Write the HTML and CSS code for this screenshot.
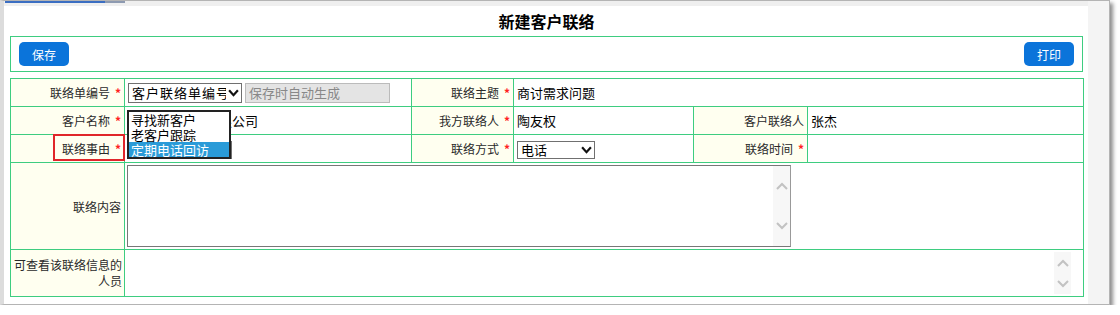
FILE: index.html
```html
<!DOCTYPE html>
<html lang="zh-CN">
<head>
    <meta charset="UTF-8">
    <title>新建客户联络</title>
    <link rel="stylesheet" href="styles.css">
</head>
<body>
<div class="frame">
    <div class="page">
        <div class="tabs"><span class="tab-on"></span><span class="tab-off"></span></div>
        <h2>新建客户联络</h2>
        <div class="toolbar">
            <button type="button">保存</button>
            <button type="button">打印</button>
        </div>
        <table class="grid">
            <colgroup>
                <col style="width:114px">
                <col style="width:287px">
                <col style="width:102px">
                <col style="width:180px">
                <col style="width:114px">
                <col style="width:276px">
            </colgroup>
            <tr class="row">
                <td class="lbl">联络单编号<span class="req">*</span></td>
                <td class="val">
                    <div class="inline">
                        <span class="sel sel-no"><span class="sel-text">客户联络单编号</span><svg class="arrow" viewBox="0 0 10 7"><path d="M1 1 L5 5.5 L9 1"/></svg></span>
                        <span class="ro">保存时自动生成</span>
                    </div>
                </td>
                <td class="lbl">联络主题<span class="req">*</span></td>
                <td class="val" colspan="3">商讨需求问题</td>
            </tr>
            <tr class="row">
                <td class="lbl">客户名称<span class="req">*</span></td>
                <td class="val">北京华信科技有限公司</td>
                <td class="lbl">我方联络人<span class="req">*</span></td>
                <td class="val">陶友权</td>
                <td class="lbl">客户联络人</td>
                <td class="val">张杰</td>
            </tr>
            <tr class="row">
                <td class="lbl marked">联络事由<span class="req">*</span><span class="mark"></span></td>
                <td class="val">
                    <div class="combo">
                        <span class="sel sel-reason"><span class="sel-text">定期电话回访</span><svg class="arrow" viewBox="0 0 10 7"><path d="M1 1 L5 5.5 L9 1"/></svg></span>
                        <ul class="droplist">
                            <li>寻找新客户</li>
                            <li>老客户跟踪</li>
                            <li class="on">定期电话回访</li>
                        </ul>
                    </div>
                </td>
                <td class="lbl">联络方式<span class="req">*</span></td>
                <td class="val">
                    <span class="sel sel-way"><span class="sel-text">电话</span><svg class="arrow" viewBox="0 0 10 7"><path d="M1 1 L5 5.5 L9 1"/></svg></span>
                </td>
                <td class="lbl">联络时间<span class="req">*</span></td>
                <td class="val"></td>
            </tr>
            <tr class="row-memo">
                <td class="lbl">联络内容</td>
                <td class="val pad2" colspan="5">
                    <div class="memo">
                        <div class="vscroll">
                            <svg viewBox="0 0 12 8"><path d="M1 7 L6 2 L11 7"/></svg>
                            <svg viewBox="0 0 12 8"><path d="M1 1 L6 6 L11 1"/></svg>
                        </div>
                    </div>
                </td>
            </tr>
            <tr class="row-people">
                <td class="lbl wrap">可查看该联络信息的人员</td>
                <td class="val pad2" colspan="5">
                    <div class="people">
                        <div class="vscroll">
                            <svg viewBox="0 0 12 8"><path d="M1 7 L6 2 L11 7"/></svg>
                            <svg viewBox="0 0 12 8"><path d="M1 1 L6 6 L11 1"/></svg>
                        </div>
                    </div>
                </td>
            </tr>
        </table>
    </div>
    <div class="gutter"></div>
</div>
</body>
</html>
```

FILE: styles.css
```css
body {
    margin: 0;
    background-color: #fff;
    font-family: "Noto Sans CJK SC", sans-serif;
}
.frame {
    display: flex;
    width: 1105px;
    height: 303px;
    border: 1px solid #b4b4b4;
    border-left: 4px solid #dcdcdc;
    box-shadow: 3px 3px 4px rgba(0,0,0,0.45);
}
.page {
    width: 1084px;
    padding: 0 5px 0 6px;
    box-sizing: border-box;
    background-color: #fff;
}
.gutter {
    flex: 1;
    background-color: #f4f4f4;
}
.tabs {
    display: flex;
    align-items: flex-start;
    height: 5px;
    margin: 0 -5px 0 -6px;
    background-color: #efefef;
}
.tab-on {
    margin-left: 1px;
    width: 100px;
    height: 2px;
    background-color: #3b6ec2;
}
.tab-off {
    width: 20px;
    height: 2px;
    background-color: #8d9ab1;
}
h2 {
    margin: 0;
    height: 30px;
    line-height: 30px;
    font-size: 16px;
    text-align: center;
    color: #000;
}
.toolbar {
    display: flex;
    justify-content: space-between;
    border: 1px solid #3ecd80;
    padding: 5px 8px;
}
button {
    width: 50px;
    height: 24px;
    padding: 0;
    border: none;
    border-radius: 5px;
    background-color: #0b74da;
    color: #fff;
    font-family: "Noto Sans CJK SC", sans-serif;
    font-size: 12px;
}
.grid {
    margin-top: 6px;
    width: 1073px;
    border-collapse: collapse;
    table-layout: fixed;
}
.grid td {
    border: 1px solid #3ecd80;
    padding: 0 3px;
}
.row {
    height: 28px;
}
.row-memo {
    height: 87px;
}
.row-people {
    height: 47px;
}
.grid .lbl {
    background-color: #fffff0;
    text-align: right;
    font-size: 12px;
    color: #2a2a2a;
    padding: 0 3px 0 0;
    white-space: nowrap;
}
.grid .lbl.wrap {
    white-space: normal;
    line-height: 16px;
    padding-right: 2px;
}
.grid .val {
    font-size: 13px;
    color: #000;
}
.grid .val.pad2 {
    padding: 2px;
}
.req {
    margin-left: 5px;
    color: #f22;
    font-size: 12px;
    font-weight: bold;
}
.marked {
    position: relative;
}
.mark {
    position: absolute;
    right: -1px;
    top: -1px;
    width: 72px;
    height: 27px;
    border: 2px solid #e0262a;
    box-sizing: border-box;
}
.inline {
    display: flex;
    align-items: center;
    gap: 3px;
}
.sel {
    display: inline-flex;
    align-items: center;
    justify-content: space-between;
    box-sizing: border-box;
    border: 1px solid #707070;
    background-color: #fff;
    padding: 0 2px 0 3px;
    font-size: 13px;
    color: #000;
    overflow: hidden;
    white-space: nowrap;
    vertical-align: middle;
}
.sel-text {
    overflow: hidden;
}
.sel-no {
    width: 114px;
    height: 20px;
}
.sel-no .sel-text {
    letter-spacing: 1px;
}
.sel-way {
    width: 78px;
    height: 18px;
}
.sel-reason {
    width: 104px;
    height: 18px;
}
.arrow {
    flex: none;
    width: 11px;
    height: 8px;
    margin-left: 2px;
}
.arrow path {
    fill: none;
    stroke: #111;
    stroke-width: 2;
}
.ro {
    display: inline-block;
    box-sizing: border-box;
    width: 145px;
    height: 20px;
    line-height: 18px;
    padding-left: 3px;
    border: 1px solid #bbb;
    background-color: #e4e4e4;
    color: #888;
    font-size: 13px;
}
.combo {
    position: relative;
}
.droplist {
    position: absolute;
    left: -1px;
    bottom: 0;
    width: 104px;
    margin: 0;
    padding: 0;
    list-style: none;
    border: 2px solid #222;
    background-color: #fff;
    box-sizing: border-box;
}
.droplist li {
    height: 15px;
    line-height: 15px;
    padding-left: 2px;
    font-size: 13px;
    white-space: nowrap;
}
.droplist li.on {
    background-color: #2a9bd8;
    color: #fff;
}
.memo {
    display: flex;
    justify-content: flex-end;
    width: 664px;
    height: 82px;
    box-sizing: border-box;
    border: 1px solid #777;
    border-right-color: #999;
}
.people {
    display: flex;
    justify-content: flex-end;
    height: 42px;
    margin-right: 10px;
}
.vscroll {
    display: flex;
    flex-direction: column;
    justify-content: space-around;
    align-items: center;
    width: 17px;
    background-color: #f7f7f7;
}
.vscroll svg {
    width: 12px;
    height: 8px;
}
.vscroll path {
    fill: none;
    stroke: #c2c2c2;
    stroke-width: 2;
}
```
